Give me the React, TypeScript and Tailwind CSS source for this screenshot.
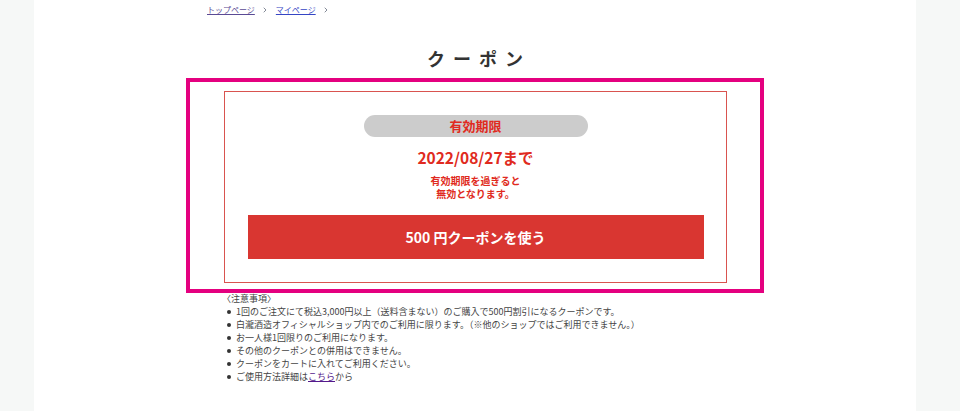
import { ChevronRight } from 'lucide-react';

const notes = [
  '1回のご注文にて税込3,000円以上（送料含まない）のご購入で500円割引になるクーポンです。',
  '白瀧酒造オフィシャルショップ内でのご利用に限ります。（※他のショップではご利用できません。）',
  'お一人様1回限りのご利用になります。',
  'その他のクーポンとの併用はできません。',
  'クーポンをカートに入れてご利用ください。',
];

const App = () => {
  return (
    <div className="min-h-screen bg-[#f6f8f7] font-['Noto_Sans_CJK_JP','Noto_Sans',sans-serif]">
      <div className="ml-[34px] w-[882px] min-h-[411px] bg-white">
        {/* breadcrumb */}
        <nav className="mx-auto w-[536px] pt-[3px] flex items-center text-[8px] leading-[14px]">
          <a href="#" className="text-[#5a4a94] underline">トップページ</a>
          <ChevronRight className="w-[8px] h-[8px] ml-[6px] text-gray-500" strokeWidth={2.5} />
          <a href="#" className="ml-[7px] text-[#3545c4] underline">マイページ</a>
          <ChevronRight className="w-[8px] h-[8px] ml-[6px] text-gray-500" strokeWidth={2.5} />
        </nav>

        <h1 className="mt-[28px] text-center text-[18px] leading-[26px] font-semibold tracking-[8px] pl-[8px] text-[#333]">
          クーポン
        </h1>

        {/* coupon */}
        <div className="mx-auto mt-[7px] w-[578px] h-[215px] border-4 border-[#e4007f] pt-[9px] pl-[34px]">
          <div className="w-[503px] h-[192px] border border-[#d9534f] pt-[23px] flex flex-col items-center">
            <div className="w-[224px] h-[22px] rounded-full bg-[#cccccc] flex items-center justify-center text-[13px] leading-[16px] font-bold text-[#e02a20]">
              有効期限
            </div>
            <p className="mt-[8px] text-[15.5px] leading-[24px] font-bold text-[#e02a20]">2022/08/27まで</p>
            <p className="mt-[5px] text-[10px] leading-[13px] font-bold text-[#e02a20] text-center">
              有効期限を過ぎると
              <br />
              無効となります。
            </p>
            <button
              type="button"
              className="mt-[15px] w-[456px] h-[44px] bg-[#d93631] text-white text-[14px] leading-[20px] font-bold"
            >
              500 円クーポンを使う
            </button>
          </div>
        </div>

        {/* notes */}
        <div className="mx-auto mt-[-1px] w-[506px] text-[9px] leading-[13px] text-[#444]">
          <p>〈注意事項〉</p>
          <ul>
            {notes.map(n => (
              <li key={n} className="flex items-center">
                <span className="w-[4px] h-[4px] rounded-full bg-[#333] ml-[5px] mr-[5px] shrink-0" />
                <span>{n}</span>
              </li>
            ))}
            <li className="flex items-center">
              <span className="w-[4px] h-[4px] rounded-full bg-[#333] ml-[5px] mr-[5px] shrink-0" />
              <span>
                ご使用方法詳細は<a href="#" className="text-[#551a8b] underline">こちら</a>から
              </span>
            </li>
          </ul>
        </div>
      </div>
    </div>
  );
};

export default App;
